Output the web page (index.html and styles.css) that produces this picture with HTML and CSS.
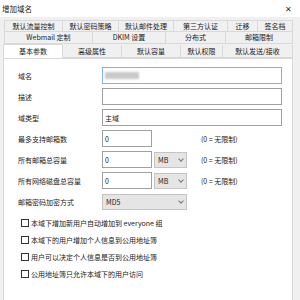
FILE: index.html
```html
<!DOCTYPE html>
<html lang="zh-CN">
<head>
    <meta charset="UTF-8">
    <title>增加域名</title>
    <link rel="stylesheet" href="styles.css">
</head>
<body>
    <div class="dialog">
        <div class="titlebar">
            <span class="title">增加域名</span>
            <span class="close">✕</span>
        </div>

        <div class="tabs">
            <div class="tab-row">
                <div class="tab w58">默认流量控制</div>
                <div class="tab w56">默认密码策略</div>
                <div class="tab w55">默认邮件处理</div>
                <div class="tab w54">第三方认证</div>
                <div class="tab w30">迁移</div>
                <div class="tab w36">签名档</div>
            </div>
            <div class="tab-row">
                <div class="tab w88">Webmail 定制</div>
                <div class="tab w73">DKIM 设置</div>
                <div class="tab w60">分布式</div>
                <div class="tab w68">邮箱限制</div>
            </div>
            <div class="tab-row last">
                <div class="tab active w59">基本参数</div>
                <div class="tab w59">高级属性</div>
                <div class="tab w59">默认容量</div>
                <div class="tab w42">默认权限</div>
                <div class="tab w71">默认发送/接收</div>
            </div>
        </div>

        <div class="panel">
            <div class="form">
                <label>域名</label>
                <div class="input long focused"><span class="redacted"></span></div>

                <label>描述</label>
                <div class="input long"></div>

                <label>域类型</label>
                <div class="input long">主域</div>

                <label>最多支持邮箱数</label>
                <div class="field">
                    <div class="input short">0</div>
                    <span></span>
                    <span class="note">(0 = 无限制)</span>
                </div>

                <label>所有邮箱总容量</label>
                <div class="field">
                    <div class="input short">0</div>
                    <div class="select">MB<i class="chev"></i></div>
                    <span class="note">(0 = 无限制)</span>
                </div>

                <label>所有网络磁盘总容量</label>
                <div class="field">
                    <div class="input short">0</div>
                    <div class="select">MB<i class="chev"></i></div>
                    <span class="note">(0 = 无限制)</span>
                </div>

                <label>邮箱密码加密方式</label>
                <div class="field">
                    <div class="select wide">MD5<i class="chev"></i></div>
                </div>
            </div>

            <div class="checks">
                <div class="check"><span class="box"></span>本域下增加新用户自动增加到 everyone 组</div>
                <div class="check"><span class="box"></span>本域下的用户增加个人信息到公用地址簿</div>
                <div class="check"><span class="box"></span>用户可以决定个人信息是否到公用地址簿</div>
                <div class="check"><span class="box"></span>公用地址簿只允许本域下的用户访问</div>
            </div>
        </div>
    </div>
</body>
</html>
```

FILE: styles.css
```css
:root {
    --frame: #f0f0f0;
    --line: #d9d9d9;
    --field-line: #a0a0a0;
    --text: #1a1a1a;
}
* {
    box-sizing: border-box;
}
body {
    margin: 0;
    width: 300px;
    height: 300px;
    overflow: hidden;
    font-family: "Noto Sans CJK SC", "Noto Sans", sans-serif;
    font-size: 7px;
    color: var(--text);
    background: var(--frame);
}
.dialog {
    height: 300px;
    display: flex;
    flex-direction: column;
}
.titlebar {
    height: 17px;
    background: #fff;
    display: flex;
    align-items: center;
    justify-content: space-between;
    padding: 0 8px 0 2px;
}
.title {
    font-size: 7.5px;
}
.close {
    font-size: 8px;
    color: #333;
}
.tabs {
    padding: 3px 7px 0 3px;
}
.tab-row {
    display: flex;
    height: 12px;
    padding-left: 1px;
}
.tab-row.last {
    height: 14px;
    padding-left: 0;
    align-items: flex-end;
}
.tab {
    height: 12px;
    border: 1px solid var(--line);
    border-right: none;
    background: var(--frame);
    display: flex;
    align-items: center;
    justify-content: center;
    white-space: nowrap;
    line-height: 1;
}
.tab:last-child {
    border-right: 1px solid var(--line);
}
.tab-row + .tab-row .tab {
    border-top: none;
}
.tab-row.last .tab {
    height: 13px;
}
.tab.active {
    background: #fff;
    height: 14px !important;
    border-top: 1px solid var(--line) !important;
    border-bottom: none;
}
.w30 { width: 30px; }
.w36 { width: 36px; }
.w42 { width: 42px; }
.w54 { width: 54px; }
.w55 { width: 55px; }
.w56 { width: 56px; }
.w58 { width: 58px; }
.w59 { width: 59px; }
.w60 { width: 60px; }
.w68 { width: 68px; }
.w71 { width: 71px; }
.w73 { width: 73px; }
.w88 { width: 88px; }
.panel {
    flex: 1;
    margin: 0 7px 0 3px;
    background: #fff;
    border: 1px solid var(--line);
    border-bottom: none;
    padding: 8px 0 0 14px;
}
.form {
    display: grid;
    grid-template-columns: 84px 1fr;
    grid-auto-rows: 17px;
    row-gap: 4px;
    align-items: center;
}
.form label {
    white-space: nowrap;
}
.field {
    display: grid;
    grid-template-columns: 50px 35px auto;
    column-gap: 2px;
    align-items: center;
    height: 17px;
}
.input {
    height: 17px;
    border: 1px solid var(--field-line);
    background: #fff;
    padding: 0 2px;
    display: flex;
    align-items: center;
}
.input.long {
    width: 180px;
}
.input.focused {
    border-color: #7eb4ea;
}
.redacted {
    width: 34px;
    height: 7px;
    background: #c9c9c9;
    filter: blur(1.2px);
}
.select {
    height: 16px;
    border: 1px solid #c4c4c4;
    background: #e5e5e5;
    padding: 0 3px;
    display: flex;
    align-items: center;
    justify-content: space-between;
    width: 33px;
}
.select.wide {
    width: 85px;
}
.chev {
    width: 4px;
    height: 4px;
    border-right: 1px solid #777;
    border-bottom: 1px solid #777;
    transform: rotate(45deg);
    margin-top: -2px;
}
.note {
    margin-left: 10px;
    white-space: nowrap;
}
.checks {
    margin-top: 7px;
    display: flex;
    flex-direction: column;
    gap: 6px;
    padding-left: 3px;
}
.check {
    display: flex;
    align-items: center;
    height: 11px;
    white-space: nowrap;
}
.box {
    width: 8px;
    height: 8px;
    border: 1px solid #333;
    margin-right: 2px;
    flex: none;
}
```
